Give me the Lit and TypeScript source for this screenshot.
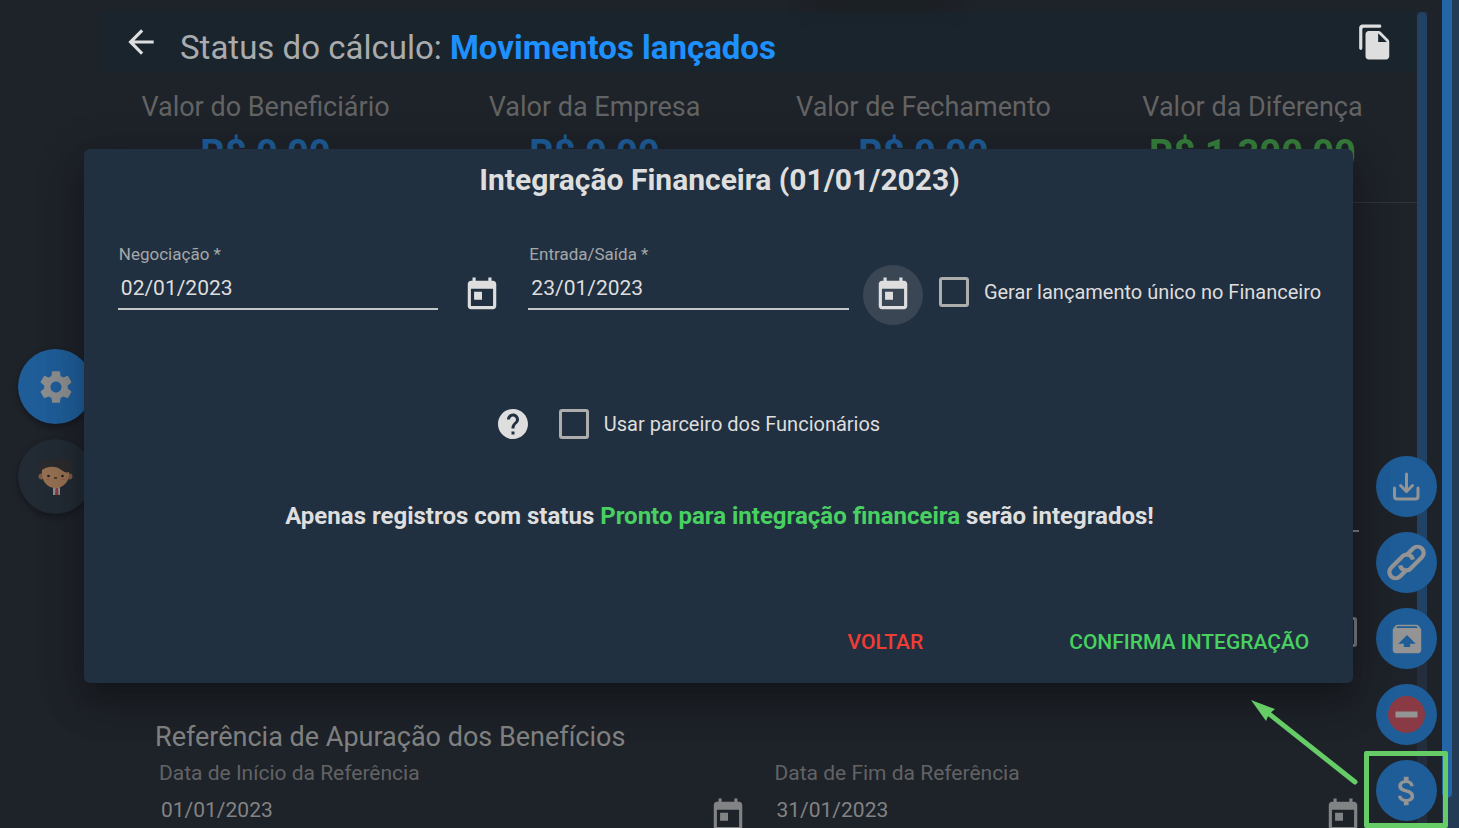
import { LitElement, html, svg, css } from "lit";
import { customElement, property } from "lit/decorators.js";

const paths = {
  back: "M20 11H7.83l5.59-5.59L12 4l-8 8 8 8 1.41-1.41L7.83 13H20v-2z",
  copy: "M15 1H4c-1.1 0-2 .9-2 2v13c0 .55.45 1 1 1s1-.45 1-1V4c0-.55.45-1 1-1h10c.55 0 1-.45 1-1s-.45-1-1-1zm.59 4.59l4.83 4.83c.37.37.58.88.58 1.41V21c0 1.1-.9 2-2 2H7.99C6.89 23 6 22.1 6 21l.01-14c0-1.1.89-2 1.99-2h6.17c.53 0 1.04.21 1.42.59zM14 12h5.5L14 6.5V12z",
  today: "M19 3h-1V1h-2v2H8V1H6v2H5c-1.11 0-1.99.9-1.99 2L3 19c0 1.1.89 2 2 2h14c1.1 0 2-.9 2-2V5c0-1.1-.9-2-2-2zm0 16H5V8h14v11zM7 10h5v5H7z",
  help: "M12 2C6.48 2 2 6.48 2 12s4.48 10 10 10 10-4.48 10-10S17.52 2 12 2zm1 17h-2v-2h2v2zm2.07-7.75l-.9.92C13.45 12.9 13 13.5 13 15h-2v-.5c0-1.1.45-2.1 1.17-2.83l1.24-1.26c.37-.36.59-.86.59-1.41 0-1.1-.9-2-2-2s-2 .9-2 2H8c0-2.21 1.79-4 4-4s4 1.79 4 4c0 .88-.36 1.68-.93 2.25z",
  settings: "M19.43 12.98c.04-.32.07-.64.07-.98s-.03-.66-.07-.98l2.11-1.65c.19-.15.24-.42.12-.64l-2-3.46c-.12-.22-.39-.3-.61-.22l-2.49 1c-.52-.4-1.08-.73-1.69-.98l-.38-2.65C14.46 2.18 14.25 2 14 2h-4c-.25 0-.46.18-.49.42l-.38 2.65c-.61.25-1.17.59-1.69.98l-2.49-1c-.23-.09-.49 0-.61.22l-2 3.46c-.13.22-.07.49.12.64l2.11 1.65c-.04.32-.07.65-.07.98s.03.66.07.98l-2.11 1.65c-.19.15-.24.42-.12.64l2 3.46c.12.22.39.3.61.22l2.49-1c.52.4 1.08.73 1.69.98l.38 2.65c.03.24.24.42.49.42h4c.25 0 .46-.18.49-.42l.38-2.65c.61-.25 1.17-.59 1.69-.98l2.49 1c.23.09.49 0 .61-.22l2-3.46c.12-.22.07-.49-.12-.64l-2.11-1.65zM12 15.5c-1.93 0-3.5-1.57-3.5-3.5s1.57-3.5 3.5-3.5 3.5 1.57 3.5 3.5-1.57 3.5-3.5 3.5z",
  unarchive: "M20.55 5.22l-1.39-1.68C18.88 3.21 18.47 3 18 3H6c-.47 0-.88.21-1.15.55L3.46 5.22C3.17 5.57 3 6.01 3 6.5V19c0 1.1.89 2 2 2h14c1.1 0 2-.9 2-2V6.5c0-.49-.17-.93-.45-1.28zM12 9.5l5.5 5.5H14v2h-4v-2H6.5L12 9.5zM5.12 5l.82-1h12l.93 1H5.12z",
  money: "M11.8 10.9c-2.27-.59-3-1.2-3-2.15 0-1.09 1.01-1.85 2.7-1.85 1.78 0 2.44.85 2.5 2.1h2.21c-.07-1.72-1.12-3.3-3.21-3.81V3h-3v2.16c-1.94.42-3.5 1.68-3.5 3.61 0 2.31 1.91 3.46 4.7 4.13 2.5.6 3 1.48 3 2.41 0 .69-.49 1.79-2.7 1.79-2.06 0-2.87-.92-2.98-2.1h-2.2c.12 2.19 1.76 3.42 3.68 3.83V21h3v-2.15c1.95-.37 3.5-1.5 3.5-3.55 0-2.84-2.43-3.81-4.7-4.4z",
};

const icon = (d: string) =>
  html`<svg class="icon" viewBox="0 0 24 24" aria-hidden="true">${svg`<path d=${d} />`}</svg>`;

const downloadArt = html`<svg class="art" viewBox="0 0 61 61" aria-hidden="true">
  <path class="line" d="M18.500 32v8.500q0 2.500 2.500 2.500h18.500q2.500 0 2.500-2.500V32M30.500 18v17M24.500 29.500l6 6 6-6" />
</svg>`;
const linkArt = html`<svg class="art" viewBox="0 0 61 61" aria-hidden="true">
  <g transform="translate(30.500 30.500) rotate(-45)">
    <path class="thick" d="M6.500-5.200H14.500a6.200 6.200 0 0 1 0 12.400H-1A6.200 6.200 0 0 1-6.500-2.500" />
    <path class="thick" d="M-6.500 5.200H-14.500a6.200 6.200 0 0 1 0-12.400H1A6.200 6.200 0 0 1 6.500 2.500" />
  </g>
</svg>`;
const blockArt = html`<svg class="art" viewBox="0 0 61 61" aria-hidden="true">
  <circle cx="30.500" cy="30.500" r="18.500" fill="#8a3a44" />
  <rect x="19.500" y="27.500" width="22" height="6" fill="#949494" />
</svg>`;
const avatarArt = html`<svg class="art" viewBox="0 0 75 75" aria-hidden="true">
  <path d="M35 47h7v9h-7z" fill="#8f8f92" />
  <path d="M37.500 49h2.500l.5 7h-3.500z" fill="#8c3b3f" />
  <path d="M21 36C19 24 27 21 34 21c4-3 20-3 20 7v8z" fill="#2b2b2e" />
  <circle cx="23.500" cy="37.500" r="3" fill="#7b5a43" />
  <circle cx="51.500" cy="37.500" r="3" fill="#7b5a43" />
  <path d="M24 31c6-4 13-4 18-1 4 3 6 4 9 3 1 10-6 16-13.500 16S23 43 24 31z" fill="#957052" />
  <circle cx="30.500" cy="37" r="1.300" fill="#2a211d" />
  <circle cx="44.500" cy="37" r="1.300" fill="#2a211d" />
  <path d="M36 39h3" stroke="#2a211d" stroke-width="1.300" />
  <path d="M28 40.500h3M44 40.500h3" stroke="#a1564b" stroke-width="1" />
</svg>`;

const shared = css`
  * { box-sizing: border-box; }
  button { border: 0; padding: 0; margin: 0; background: none; color: inherit; font: inherit; cursor: pointer; display: grid; place-items: center; }
  .icon { width: 38px; height: 38px; fill: currentColor; display: block; }
`;

@customElement("date-field")
class DateField extends LitElement {
  @property() label = "";
  @property() value = "";
  @property({ type: Boolean }) active = false;

  static styles = [
    shared,
    css`
      :host { display: flex; flex: 1; min-width: 0; align-items: flex-start; gap: 14px; color: #dedede; }
      .text { flex: 1; min-width: 0; border-bottom: 2px solid #c4c8c8; }
      label { display: block; padding-left: 1px; font-size: 17px; line-height: 20px; color: #a5a7a9; }
      input { display: block; width: 100%; margin-top: 12px; padding: 0 3px 7px; border: 0; outline: 0; background: none; color: inherit; font: inherit; font-size: 21px; line-height: 25px; }
      button { width: 60px; height: 60px; margin-top: 21px; border-radius: 50%; }
      button.active { background: #3b4654; }
      :host(.dim) { color: #828384; }
      :host(.dim) .text { border-color: #6d6f70; }
      :host(.dim) label { font-size: 21px; line-height: 25px; color: #626365; }
      :host(.dim) button { width: 38px; height: 38px; margin: 36px -5px 0 0; }
    `,
  ];

  render() {
    return html`
      <div class="text">
        <label for="date">${this.label}</label>
        <input id="date" type="text" .value=${this.value} />
      </div>
      <button class=${this.active ? "active" : ""} aria-label="Abrir calendário">${icon(paths.today)}</button>
    `;
  }
}

@customElement("app-root")
class AppRoot extends LitElement {
  static styles = [
    shared,
    css`
      :host { display: block; position: relative; height: 100vh; overflow: hidden; background: #1e2229; font-family: Roboto, sans-serif; color: #dedede; }
      h1, h2, h3, p { margin: 0; font-weight: 400; }

      .page { display: grid; grid-template-columns: 101px minmax(0, 1fr) 10px 15px 17px; height: 100%; }
      .rail { display: flex; flex-direction: column; gap: 15px; padding: 349px 0 0 18px; }
      .rail button { width: 75px; height: 75px; border-radius: 50%; background: #1f5d98; color: #8c8d8e; box-shadow: 0 3px 6px rgba(0, 0, 0, 0.3); }
      .rail .person { background: #222a33; }
      .art { display: block; width: 100%; height: 100%; }

      .content { padding-top: 12px; }
      .bar { display: flex; align-items: flex-start; height: 60px; padding: 11px 23px 0 21px; background: #1a242d; }
      .bar h1 { flex: 1; padding: 5px 0 0 20px; font-size: 33px; line-height: 40px; color: #a9abac; }
      .bar strong { font-weight: 700; color: #1e90ff; }

      .totals { display: grid; grid-template-columns: repeat(4, 1fr); height: 131px; padding-top: 19px; border-bottom: 1px solid #303439; text-align: center; }
      .totals dt { font-size: 27px; line-height: 32px; color: #636363; }
      .totals dd { margin: 9px 0 0; font-size: 38px; line-height: 44px; font-weight: 700; color: #1d5a94; }
      .totals dd.up { color: #367c3c; }
      .totals dl { margin: 0; }

      .hidden-part { display: flex; flex-direction: column; padding: 288px 58px 0 56px; }
      .hidden-part input[type="text"] { height: 41px; border: 0; border-bottom: 2px solid #777879; background: none; }
      .hidden-part input[type="checkbox"] { align-self: flex-end; margin: 85px 2px 0 0; border-color: #77787a; }
      .reference { padding: 74px 60px 0 57px; }
      .reference h2 { margin: 0 0 8px -3px; font-size: 27px; line-height: 32px; color: #828282; }
      .pair { display: grid; grid-template-columns: 1fr 1fr; gap: 32px; }

      .scroll { margin-top: 12px; background: #232d3c; }
      .scroll .thumb { height: 630px; border-radius: 5px 5px 0 0; background: #214264; }
      .window-scroll { grid-column: 5; background: #243b56; }
      .window-scroll .thumb { width: 10px; height: 798px; border-radius: 0 0 5px 5px; background: #2465a5; }

      .toast { position: absolute; left: 56%; top: -20px; width: 128px; height: 12px; box-shadow: 0 6px 24px 4px rgba(24, 28, 24, 0.6); }

      .actions { position: absolute; right: 22px; bottom: 7px; display: flex; flex-direction: column; gap: 15px; color: #949494; }
      .actions button { width: 61px; height: 61px; border-radius: 50%; background: #1f5d98; }
      .line { fill: none; stroke: currentColor; stroke-width: 3; stroke-linecap: round; stroke-linejoin: round; }
      .thick { fill: none; stroke: currentColor; stroke-width: 4.2; }

      .overlay { position: absolute; inset: 0; display: grid; place-items: center; padding: 4px 22px 0 0; }
      .dialog { width: 87vw; padding: 13px 32px 17px 34px; border-radius: 6px; background: #213040; box-shadow: 0 11px 15px -7px rgba(0, 0, 0, 0.2), 0 24px 38px 3px rgba(0, 0, 0, 0.14), 0 9px 46px 8px rgba(0, 0, 0, 0.12); }
      .dialog h2 { margin-bottom: 46px; text-align: center; font-size: 30px; line-height: 36px; font-weight: 700; }
      .fields { display: flex; align-items: flex-start; gap: 16px; }
      .check { display: flex; align-items: center; gap: 15px; font-size: 20px; line-height: 24px; white-space: nowrap; }
      .fields .check { padding-top: 33px; }
      input[type="checkbox"] { appearance: none; width: 30px; height: 30px; margin: 0; border: 3px solid #adadad; border-radius: 3px; }
      .partner { display: flex; justify-content: center; align-items: center; margin-top: 81px; padding-right: 64px; gap: 28px; }
      .partner .icon { width: 36px; height: 36px; }
      .notice { margin-top: 58px; text-align: center; font-size: 24px; line-height: 32px; font-weight: 700; }
      .notice em { font-style: normal; color: #48d160; }
      .buttons { display: flex; justify-content: flex-end; gap: 130px; margin-top: 86px; padding-right: 4px; }
      .buttons button { height: 48px; padding: 0 8px; font-size: 21px; font-weight: 500; }
      .cancel { color: #f13c34; }
      .confirm { color: #48d160; }

      .marker { position: absolute; right: 11px; bottom: 0; width: 84px; height: 77px; border: 5px solid #65cc66; border-radius: 2px; pointer-events: none; }
      .pointer { position: absolute; right: 98px; bottom: 40px; width: 112px; height: 92px; pointer-events: none; }
    `,
  ];

  totals = [
    { label: "Valor do Beneficiário", value: "R$ 0,00" },
    { label: "Valor da Empresa", value: "R$ 0,00" },
    { label: "Valor de Fechamento", value: "R$ 0,00" },
    { label: "Valor da Diferença", value: "R$ 1.300,00", up: true },
  ];

  render() {
    return html`
      <div class="page">
        <nav class="rail">
          <button aria-label="Configurações">${icon(paths.settings)}</button>
          <button class="person" aria-label="Perfil">${avatarArt}</button>
        </nav>
        <main class="content">
          <header class="bar">
            <button aria-label="Voltar à lista">${icon(paths.back)}</button>
            <h1>Status do cálculo: <strong>Movimentos lançados</strong></h1>
            <button aria-label="Copiar">${icon(paths.copy)}</button>
          </header>
          <section class="totals">
            ${this.totals.map(
              (t) => html`<dl><dt>${t.label}</dt><dd class=${t.up ? "up" : ""}>${t.value}</dd></dl>`
            )}
          </section>
          <div class="hidden-part">
            <input type="text" aria-label="Descrição" />
            <input type="checkbox" aria-label="Selecionar" />
          </div>
          <section class="reference">
            <h2>Referência de Apuração dos Benefícios</h2>
            <div class="pair">
              <date-field class="dim" label="Data de Início da Referência" value="01/01/2023"></date-field>
              <date-field class="dim" label="Data de Fim da Referência" value="31/01/2023"></date-field>
            </div>
          </section>
        </main>
        <div class="scroll"><div class="thumb"></div></div>
        <div class="window-scroll"><div class="thumb"></div></div>
      </div>

      <div class="toast"></div>

      <div class="actions">
        <button aria-label="Baixar">${downloadArt}</button>
        <button aria-label="Vincular">${linkArt}</button>
        <button aria-label="Desarquivar">${icon(paths.unarchive)}</button>
        <button aria-label="Remover">${blockArt}</button>
        <button aria-label="Integração financeira">${icon(paths.money)}</button>
      </div>

      <div class="overlay">
        <section class="dialog" role="dialog" aria-labelledby="dialog-title">
          <h2 id="dialog-title">Integração Financeira (01/01/2023)</h2>
          <div class="fields">
            <date-field label="Negociação *" value="02/01/2023"></date-field>
            <date-field label="Entrada/Saída *" value="23/01/2023" active></date-field>
            <label class="check"><input type="checkbox" />Gerar lançamento único no Financeiro</label>
          </div>
          <div class="partner">
            <button aria-label="Ajuda">${icon(paths.help)}</button>
            <label class="check"><input type="checkbox" />Usar parceiro dos Funcionários</label>
          </div>
          <p class="notice">Apenas registros com status <em>Pronto para integração financeira</em> serão integrados!</p>
          <div class="buttons">
            <button class="cancel">VOLTAR</button>
            <button class="confirm">CONFIRMA INTEGRAÇÃO</button>
          </div>
        </section>
      </div>

      <div class="marker"></div>
      <svg class="pointer" viewBox="0 0 112 92" aria-hidden="true">
        <path d="M19 17L106 86" stroke="#65cc66" stroke-width="5" stroke-linecap="round" />
        <path d="M2 4l24 9-6 5-3 7z" fill="#65cc66" />
      </svg>
    `;
  }
}
